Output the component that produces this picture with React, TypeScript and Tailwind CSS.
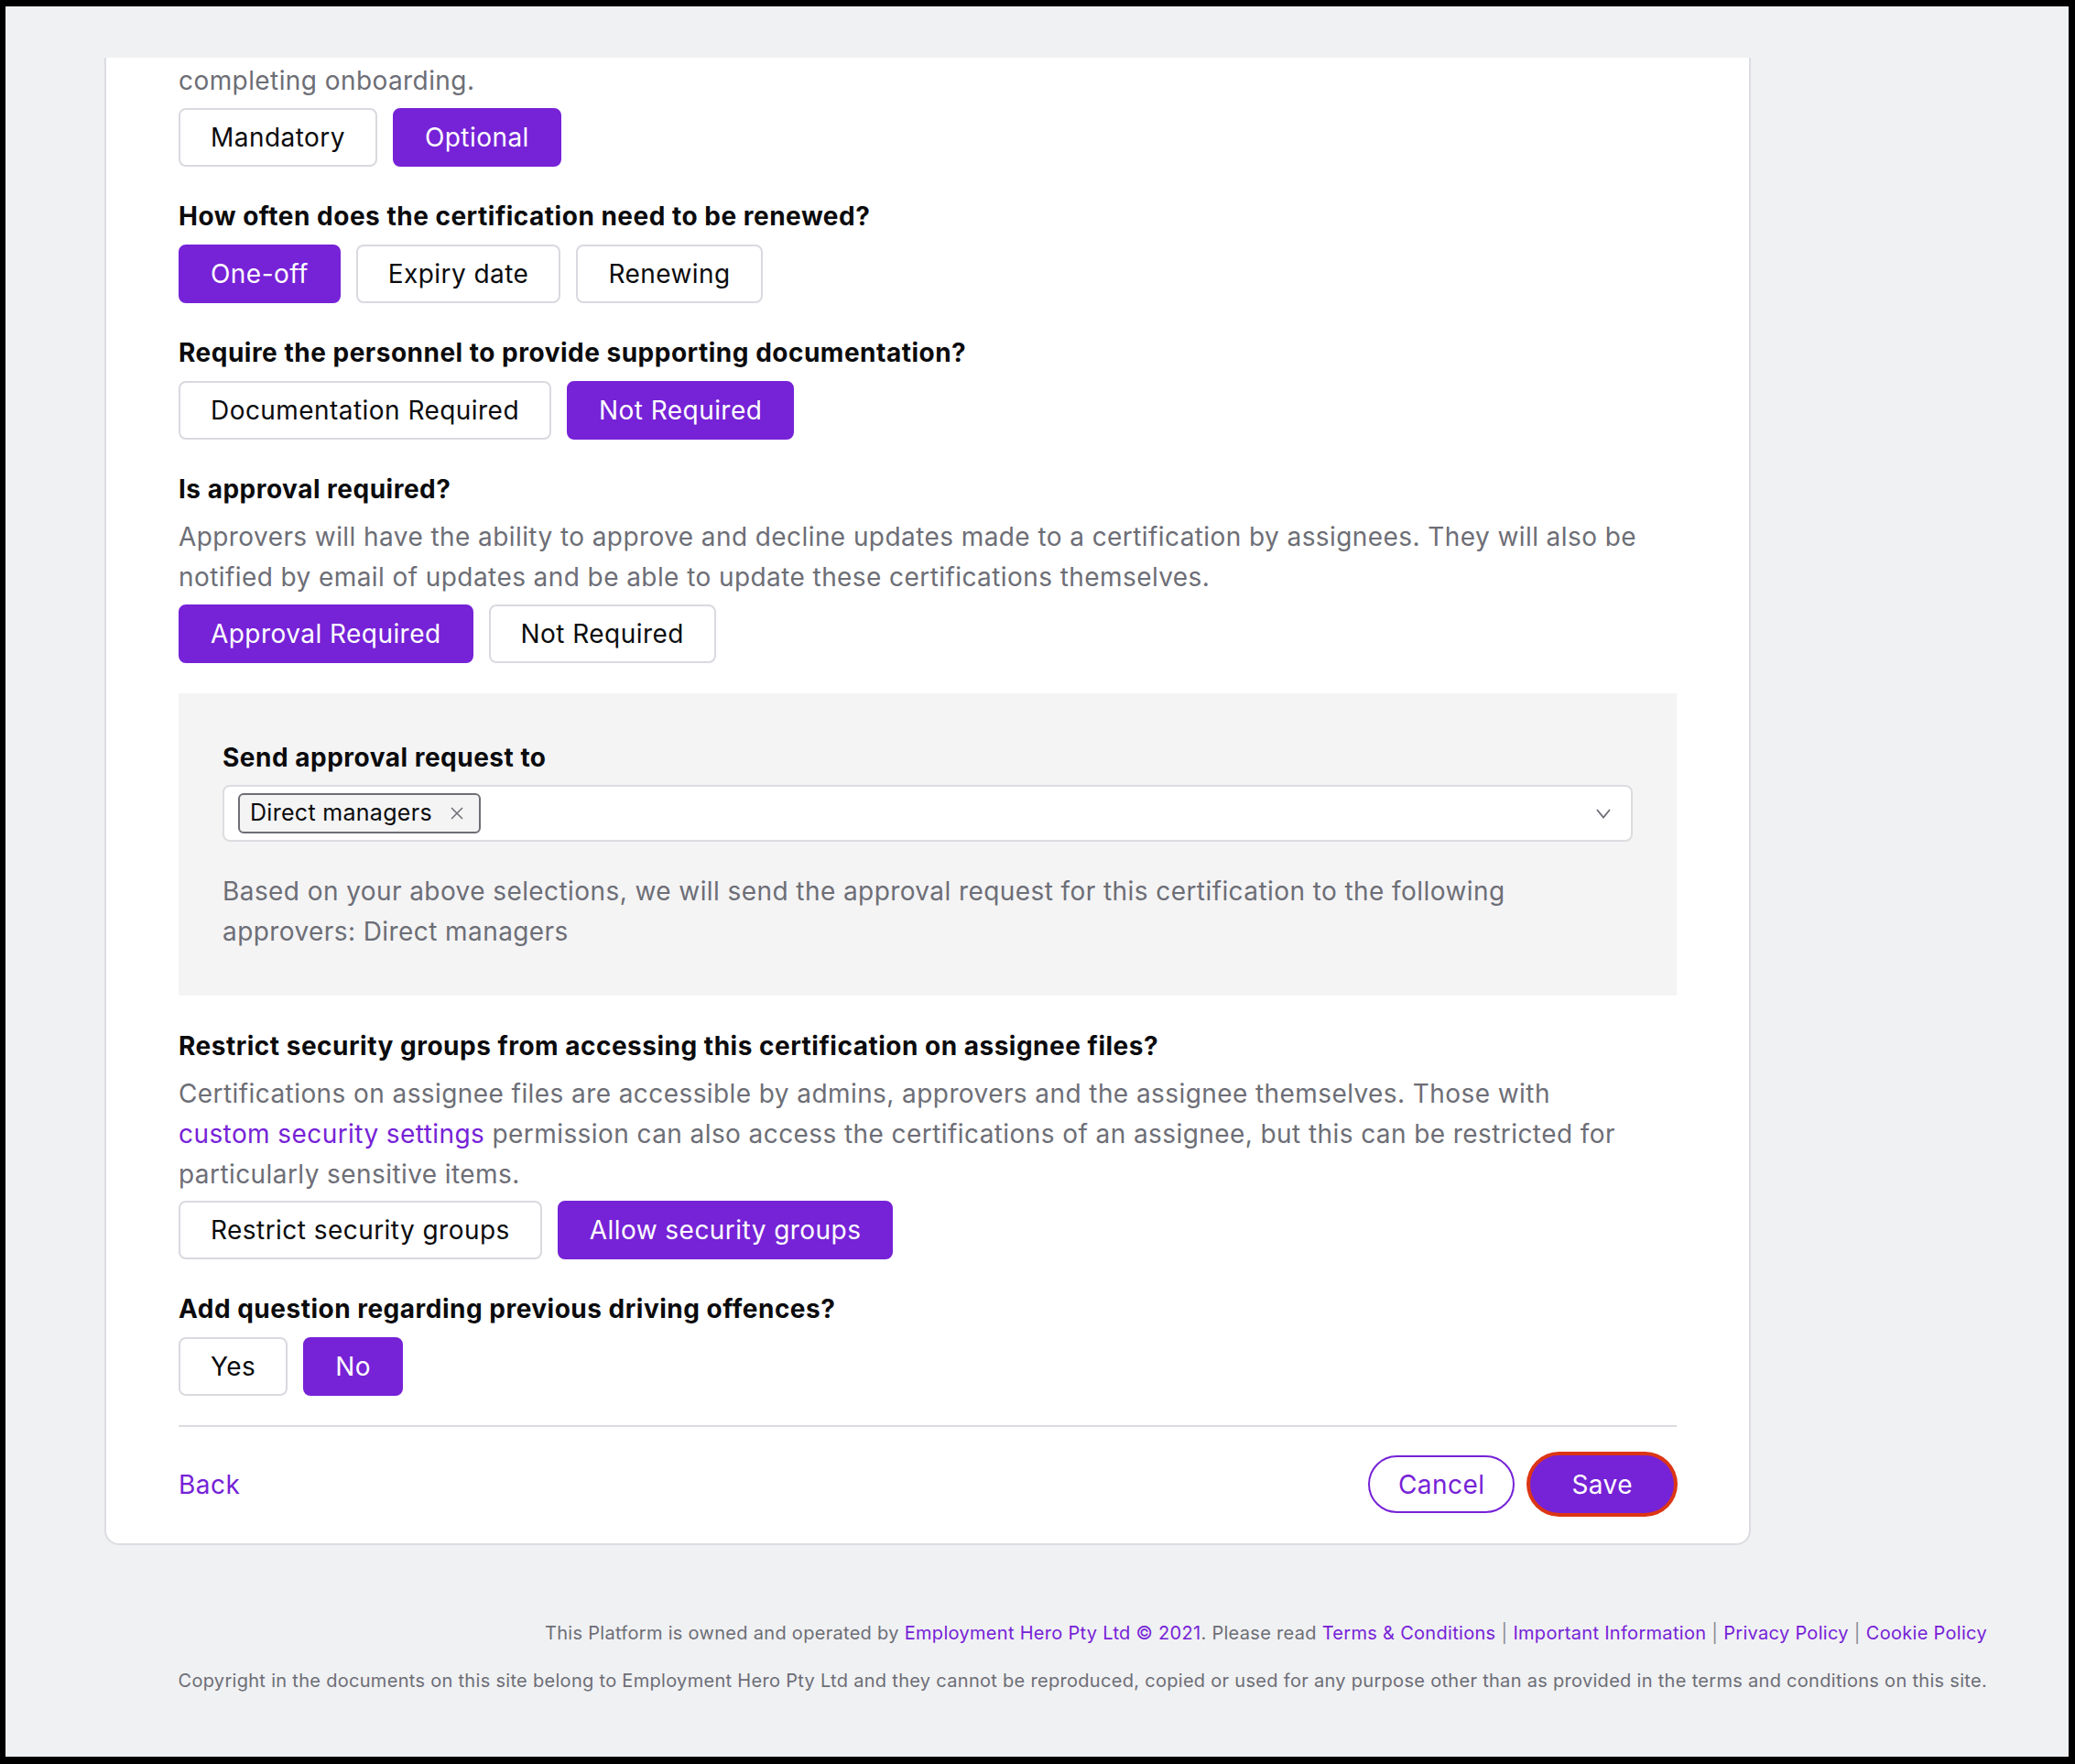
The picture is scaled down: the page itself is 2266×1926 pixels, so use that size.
import React from "react";

interface OptionProps {
  Items: { Label: string; Active?: boolean }[];
  className?: string;
}

const Options: React.FC<OptionProps> = ({ Items, className }) => {
  return (
    <div className={"flex gap-[17px] " + (className ?? "mt-[9px]")}>
      {Items.map((item) => (
        <button
          key={item.Label}
          className={
            item.Active
              ? "h-16 rounded-lg border-2 border-[#7622d7] bg-[#7622d7] px-[33px] text-[28px] tracking-[0.45px] text-white"
              : "h-16 rounded-lg border-2 border-[#d9dadf] bg-white px-[33px] text-[28px] tracking-[0.45px] text-[#0b0b0d]"
          }
        >
          {item.Label}
        </button>
      ))}
    </div>
  );
};

const Heading: React.FC<{ children: React.ReactNode; className?: string }> = ({
  children,
  className,
}) => (
  <h2
    className={
      "text-[28px] font-bold leading-[44px] tracking-[0.5px] text-[#0b0b0d] " +
      (className ?? "")
    }
  >
    {children}
  </h2>
);

const Body: React.FC<{ children: React.ReactNode; className?: string }> = ({
  children,
  className,
}) => (
  <p
    className={
      "text-[28px] leading-[44px] tracking-[0.42px] text-[#6d6e76] " +
      (className ?? "")
    }
  >
    {children}
  </p>
);

export default function App() {
  return (
    <div className="h-[1926px] w-[2266px] bg-black pb-[8px] pl-[6px] pr-[7px] pt-[7px] font-['Inter',sans-serif]">
      <div className="flex h-full flex-col bg-[#f0f1f3]">
        <div className="ml-[108px] mt-[56px] w-[1798px] rounded-b-2xl border-x-2 border-b-2 border-[#dcdde1] bg-white px-[79px] pb-[33px] pt-[3px]">
          <Body>completing onboarding.</Body>
          <Options
            className="mt-[8px]"
            Items={[{ Label: "Mandatory" }, { Label: "Optional", Active: true }]}
          />

          <Heading className="mt-[32px]">
            How often does the certification need to be renewed?
          </Heading>
          <Options
            Items={[
              { Label: "One-off", Active: true },
              { Label: "Expiry date" },
              { Label: "Renewing" },
            ]}
          />

          <Heading className="mt-[32px]">
            Require the personnel to provide supporting documentation?
          </Heading>
          <Options
            Items={[
              { Label: "Documentation Required" },
              { Label: "Not Required", Active: true },
            ]}
          />

          <Heading className="mt-[32px]">Is approval required?</Heading>
          <Body className="mt-[8px]">
            Approvers will have the ability to approve and decline updates made
            to a certification by assignees. They will also be
            <br />
            notified by email of updates and be able to update these
            certifications themselves.
          </Body>
          <Options
            className="mt-[8px]"
            Items={[
              { Label: "Approval Required", Active: true },
              { Label: "Not Required" },
            ]}
          />

          <div className="mt-[33px] bg-[#f4f4f5] px-[48px] py-[48px]">
            <Heading>Send approval request to</Heading>
            <div className="mt-[8px] flex h-[62px] items-center justify-between rounded-lg border-2 border-[#dcdce0] bg-white pl-[15px] pr-[22px]">
              <span className="flex h-[44px] items-center gap-[20px] rounded-md border-2 border-[#6d6e76] bg-[#f4f4f5] pl-[11px] pr-[17px] text-[25px] tracking-[0.3px] text-[#0b0b0d]">
                Direct managers
                <svg width="14" height="14" viewBox="0 0 14 14" fill="none">
                  <path
                    d="M1 1L13 13M13 1L1 13"
                    stroke="#6d6e76"
                    strokeWidth="1.5"
                  />
                </svg>
              </span>
              <svg width="16" height="11" viewBox="0 0 16 11" fill="none">
                <path
                  d="M1 1L8 9.5L15 1"
                  stroke="#6d6e76"
                  strokeWidth="1.8"
                />
              </svg>
            </div>
            <Body className="mt-[32px]">
              Based on your above selections, we will send the approval request
              for this certification to the following
              <br />
              approvers: Direct managers
            </Body>
          </div>

          <Heading className="mt-[33px]">
            Restrict security groups from accessing this certification on
            assignee files?
          </Heading>
          <Body className="mt-[8px]">
            Certifications on assignee files are accessible by admins,
            approvers and the assignee themselves. Those with
            <br />
            <a className="text-[#7622d7]">custom security settings</a>{" "}
            permission can also access the certifications of an assignee, but
            this can be restricted for
            <br />
            particularly sensitive items.
          </Body>
          <Options
            className="mt-[7px]"
            Items={[
              { Label: "Restrict security groups" },
              { Label: "Allow security groups", Active: true },
            ]}
          />

          <Heading className="mt-[32px]">
            Add question regarding previous driving offences?
          </Heading>
          <Options Items={[{ Label: "Yes" }, { Label: "No", Active: true }]} />

          <div className="mt-[32px] h-[2px] bg-[#dcdce0]" />

          <div className="mt-[31px] flex items-center justify-between">
            <a className="text-[28px] tracking-[0.45px] text-[#7622d7]">Back</a>
            <div className="flex items-center gap-[17px] pr-[3px]">
              <button className="h-[63px] rounded-full border-2 border-[#7622d7] bg-white px-[31px] text-[28px] tracking-[0.45px] text-[#7622d7]">
                Cancel
              </button>
              <button className="h-[63px] rounded-full bg-[#7622d7] px-[45px] text-[28px] tracking-[0.45px] text-white ring-[4px] ring-[#dc3515]">
                Save
              </button>
            </div>
          </div>
        </div>

        <div className="mt-[81px] pl-[60px] pr-[89px] text-right text-[20px] leading-[30px] tracking-[0.3px] text-[#6d6e76]">
          <p className="whitespace-nowrap">
            This Platform is owned and operated by{" "}
            <a className="text-[#7622d7]">Employment Hero Pty Ltd © 2021</a>.
            Please read <a className="text-[#7622d7]">Terms &amp; Conditions</a>
            <span className="mx-[6px] text-[#8a8b92]">|</span>
            <a className="text-[#7622d7]">Important Information</a>
            <span className="mx-[6px] text-[#8a8b92]">|</span>
            <a className="text-[#7622d7]">Privacy Policy</a>
            <span className="mx-[6px] text-[#8a8b92]">|</span>
            <a className="text-[#7622d7]">Cookie Policy</a>
          </p>
          <p className="mt-[22px] whitespace-nowrap">
            Copyright in the documents on this site belong to Employment Hero
            Pty Ltd and they cannot be reproduced, copied or used for any
            purpose other than as provided in the terms and conditions on this
            site.
          </p>
        </div>
      </div>
    </div>
  );
}
